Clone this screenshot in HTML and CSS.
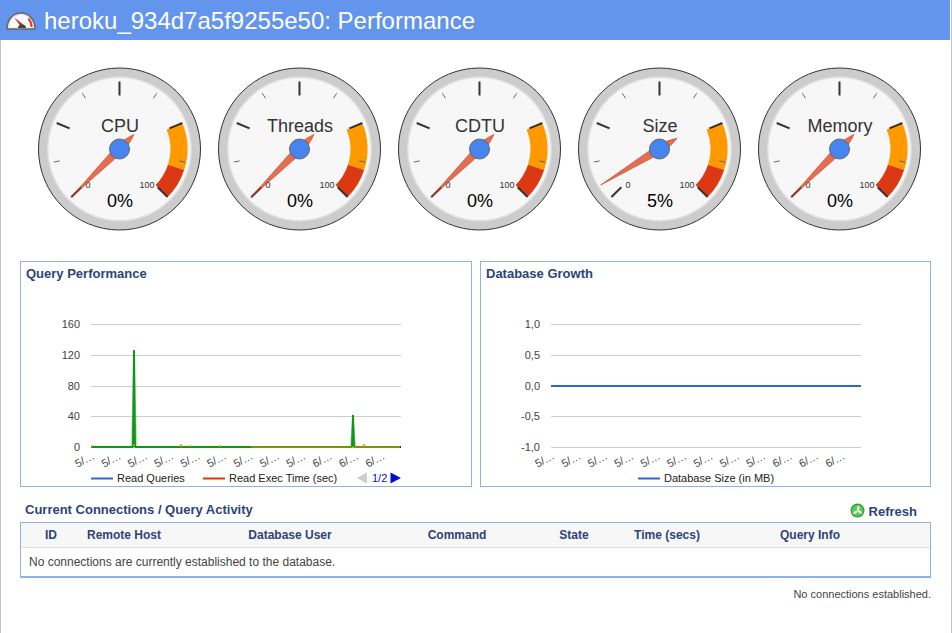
FILE: index.html
```html
<!DOCTYPE html>
<html lang="en">
<head>
<meta charset="utf-8">
<title>Performance</title>
<link rel="stylesheet" href="styles.css">
</head>
<body>
<svg class="defs" width="0" height="0" aria-hidden="true">
  <symbol id="dial" viewBox="-89.5 -90 180 180" overflow="visible">
    <circle r="81" fill="#ccc" stroke="#333" stroke-width="1"/>
    <circle r="72.5" fill="#e0e0e0"/>
    <circle r="71" fill="#f7f7f7"/>
    <path d="M47.12 -19.52 L62.82 -26.02 A68 68 0 0 1 64.67 21.01 L48.5 15.76 A51 51 0 0 0 47.12 -19.52Z" fill="#f90"/>
    <path d="M64.67 21.01 A68 68 0 0 1 48.08 48.08 L36.06 36.06 A51 51 0 0 0 48.5 15.76Z" fill="#dc3912"/>
    <g stroke="#333" stroke-width="2">
      <line x1="-38.2" y1="38.2" x2="-48.08" y2="48.08"/>
      <line x1="-49.9" y1="-20.67" x2="-62.82" y2="-26.02"/>
      <line x1="0" y1="-53.5" x2="0" y2="-67.5"/>
      <line x1="49.9" y1="-20.67" x2="62.82" y2="-26.02"/>
      <line x1="38.2" y1="38.2" x2="48.08" y2="48.08"/>
    </g>
    <g stroke="#666" stroke-width="1">
      <line x1="-59.83" y1="11.9" x2="-65.71" y2="13.07"/>
      <line x1="-33.89" y1="-50.72" x2="-37.22" y2="-55.7"/>
      <line x1="33.89" y1="-50.72" x2="37.22" y2="-55.7"/>
      <line x1="59.83" y1="11.9" x2="65.71" y2="13.07"/>
    </g>
  </symbol>
  <symbol id="needle" viewBox="-89.5 -90 180 180" overflow="visible">
    <path d="M0 -69 L4 -6 Q5 8 0 20.5 Q-5 8 -4 -6Z" fill="#dc3912" fill-opacity="0.72" stroke="#c63310" stroke-width="0.5"/>
  </symbol>
</svg>

<header class="topbar">
  <svg class="topbar-icon" width="30" height="18" viewBox="0 0 30 18">
    <path d="M1 17 C1 7.5 7 1 15 1 C23 1 29 7.5 29 17Z" fill="#e6e6e6" stroke="#666" stroke-width="1.5"/>
    <path d="M3.5 15.5 C3.5 8.5 8.5 3.2 15 3.2 C21.5 3.2 26.5 8.5 26.5 15.5Z" fill="#fff"/>
    <path d="M22.5 6.5 C24.5 9 25.5 11.5 25.6 15" fill="none" stroke="#e8401a" stroke-width="2.2"/>
    <path d="M8 5.5 L17.5 12.5 L15 15Z" fill="#b5402c"/>
    <path d="M12 16 A4 3.5 0 0 1 20 16Z" fill="#444"/>
  </svg>
  <h1 class="topbar-title">heroku_934d7a5f9255e50: Performance</h1>
</header>

<main class="page">
  <section class="gauges">
    <svg class="gauge" viewBox="-89.5 -90 180 180">
      <use href="#dial" x="-89.5" y="-90" width="180" height="180"/>
      <text class="g-title" x="0.5" y="-17">CPU</text>
      <text class="g-min" x="-31.5" y="39">0</text>
      <text class="g-max" x="35" y="39">100</text>
      <text class="g-value" x="0.5" y="58">0%</text>
      <g transform="rotate(-135)"><use href="#needle" x="-89.5" y="-90" width="180" height="180"/></g>
      <circle class="g-hub" r="10"/>
    </svg>
    <svg class="gauge" viewBox="-89.5 -90 180 180">
      <use href="#dial" x="-89.5" y="-90" width="180" height="180"/>
      <text class="g-title" x="0.5" y="-17">Threads</text>
      <text class="g-min" x="-31.5" y="39">0</text>
      <text class="g-max" x="35" y="39">100</text>
      <text class="g-value" x="0.5" y="58">0%</text>
      <g transform="rotate(-135)"><use href="#needle" x="-89.5" y="-90" width="180" height="180"/></g>
      <circle class="g-hub" r="10"/>
    </svg>
    <svg class="gauge" viewBox="-89.5 -90 180 180">
      <use href="#dial" x="-89.5" y="-90" width="180" height="180"/>
      <text class="g-title" x="0.5" y="-17">CDTU</text>
      <text class="g-min" x="-31.5" y="39">0</text>
      <text class="g-max" x="35" y="39">100</text>
      <text class="g-value" x="0.5" y="58">0%</text>
      <g transform="rotate(-135)"><use href="#needle" x="-89.5" y="-90" width="180" height="180"/></g>
      <circle class="g-hub" r="10"/>
    </svg>
    <svg class="gauge" viewBox="-89.5 -90 180 180">
      <use href="#dial" x="-89.5" y="-90" width="180" height="180"/>
      <text class="g-title" x="0.5" y="-17">Size</text>
      <text class="g-min" x="-31.5" y="39">0</text>
      <text class="g-max" x="35" y="39">100</text>
      <text class="g-value" x="0.5" y="58">5%</text>
      <g transform="rotate(-121.5)"><use href="#needle" x="-89.5" y="-90" width="180" height="180"/></g>
      <circle class="g-hub" r="10"/>
    </svg>
    <svg class="gauge" viewBox="-89.5 -90 180 180">
      <use href="#dial" x="-89.5" y="-90" width="180" height="180"/>
      <text class="g-title" x="0.5" y="-17">Memory</text>
      <text class="g-min" x="-31.5" y="39">0</text>
      <text class="g-max" x="35" y="39">100</text>
      <text class="g-value" x="0.5" y="58">0%</text>
      <g transform="rotate(-135)"><use href="#needle" x="-89.5" y="-90" width="180" height="180"/></g>
      <circle class="g-hub" r="10"/>
    </svg>
  </section>

  <section class="charts">
    <article class="panel">
      <h2 class="panel-title">Query Performance</h2>
      <svg class="chart" viewBox="0 0 449 202" width="449" height="202">
        <g class="grid">
          <line x1="70" x2="380" y1="40.5" y2="40.5"/>
          <line x1="70" x2="380" y1="71.5" y2="71.5"/>
          <line x1="70" x2="380" y1="102.5" y2="102.5"/>
          <line x1="70" x2="380" y1="132.5" y2="132.5"/>
        </g>
        <g class="y-labels">
          <text x="59" y="44">160</text>
          <text x="59" y="75">120</text>
          <text x="59" y="106">80</text>
          <text x="59" y="136">40</text>
          <text x="59" y="167">0</text>
        </g>
        <polygon class="s-halo" points="109.5,163 113,66 116.5,163"/>
        <polygon class="s-halo" points="328.5,163 332,131 335.5,163"/>
        <polyline class="s-green" points="70,163 112,163 113,66 114,163 331,163 332,131 333,163 380,163"/>
        <line class="s-orange" x1="230" x2="380" y1="163" y2="163"/>
        <line class="s-end" x1="379" x2="380" y1="163" y2="163"/>
        <g class="s-dots">
          <circle cx="160" cy="161.5" r="1.3"/><circle cx="169" cy="162" r="1"/>
          <circle cx="199" cy="162" r="1"/><circle cx="71" cy="162" r="1"/>
          <circle cx="343" cy="161.5" r="1.3"/><circle cx="113" cy="161" r="1"/>
        </g>
        <g class="x-labels">
          <text transform="translate(56.5 183.7) rotate(-28)">5/…</text>
          <text transform="translate(82.9 183.7) rotate(-28)">5/…</text>
          <text transform="translate(109.3 183.7) rotate(-28)">5/…</text>
          <text transform="translate(135.7 183.7) rotate(-28)">5/…</text>
          <text transform="translate(162.1 183.7) rotate(-28)">5/…</text>
          <text transform="translate(188.5 183.7) rotate(-28)">5/…</text>
          <text transform="translate(214.9 183.7) rotate(-28)">5/…</text>
          <text transform="translate(241.3 183.7) rotate(-28)">5/…</text>
          <text transform="translate(267.7 183.7) rotate(-28)">5/…</text>
          <text transform="translate(294.1 183.7) rotate(-28)">6/…</text>
          <text transform="translate(320.5 183.7) rotate(-28)">6/…</text>
          <text transform="translate(346.9 183.7) rotate(-28)">6/…</text>
        </g>
        <line class="leg-blue" x1="70" x2="92" y1="194.5" y2="194.5"/>
        <text class="leg-text" x="96" y="198">Read Queries</text>
        <line class="leg-red" x1="182" x2="204" y1="194.5" y2="194.5"/>
        <text class="leg-text" x="208" y="198">Read Exec Time (sec)</text>
        <polygon class="pg-off" points="336,194 346,188.5 346,199.5"/>
        <text class="pg-text" x="351" y="198">1/2</text>
        <polygon class="pg-on" points="380,194 369.5,188.5 369.5,199.5"/>
      </svg>
    </article>
    <article class="panel">
      <h2 class="panel-title">Database Growth</h2>
      <svg class="chart" viewBox="0 0 449 202" width="449" height="202">
        <g class="grid">
          <line x1="70" x2="380" y1="40.5" y2="40.5"/>
          <line x1="70" x2="380" y1="71.5" y2="71.5"/>
          <line x1="70" x2="380" y1="132.5" y2="132.5"/>
          <line x1="70" x2="380" y1="163.5" y2="163.5"/>
        </g>
        <g class="y-labels">
          <text x="59" y="44">1,0</text>
          <text x="59" y="75">0,5</text>
          <text x="59" y="106">0,0</text>
          <text x="59" y="136">-0,5</text>
          <text x="59" y="167">-1,0</text>
        </g>
        <line class="s-line" x1="70" x2="380" y1="102" y2="102"/>
        <g class="x-labels">
          <text transform="translate(56.5 183.7) rotate(-28)">5/…</text>
          <text transform="translate(82.9 183.7) rotate(-28)">5/…</text>
          <text transform="translate(109.3 183.7) rotate(-28)">5/…</text>
          <text transform="translate(135.7 183.7) rotate(-28)">5/…</text>
          <text transform="translate(162.1 183.7) rotate(-28)">5/…</text>
          <text transform="translate(188.5 183.7) rotate(-28)">5/…</text>
          <text transform="translate(214.9 183.7) rotate(-28)">5/…</text>
          <text transform="translate(241.3 183.7) rotate(-28)">5/…</text>
          <text transform="translate(267.7 183.7) rotate(-28)">5/…</text>
          <text transform="translate(294.1 183.7) rotate(-28)">6/…</text>
          <text transform="translate(320.5 183.7) rotate(-28)">6/…</text>
          <text transform="translate(346.9 183.7) rotate(-28)">6/…</text>
        </g>
        <line class="leg-blue" x1="157" x2="179" y1="194.5" y2="194.5"/>
        <text class="leg-text" x="183" y="198">Database Size (in MB)</text>
      </svg>
    </article>
  </section>

  <section class="activity">
    <div class="activity-head">
      <h2 class="activity-title">Current Connections / Query Activity</h2>
      <a class="refresh">
        <svg class="refresh-icon" width="15" height="15" viewBox="0 0 15 15">
          <circle cx="7.5" cy="7.5" r="7" fill="#2fa62f"/>
          <circle cx="7.5" cy="7.5" r="5.6" fill="#5cc85c"/>
          <path d="M7.5 7.5 C6.5 5.5 7 3.5 9 2.5 C10 3.8 9.8 6 7.5 7.5Z M7.5 7.5 C9.8 7 11.5 8 12 10.2 C10.4 10.8 8.4 10 7.5 7.5Z M7.5 7.5 C7.2 9.7 5.8 11.2 3.4 11 C3 9.4 4.6 7.8 7.5 7.5Z" fill="#fff"/>
        </svg>
        Refresh
      </a>
    </div>
    <div class="table">
      <div class="table-head">
        <span class="th">ID</span>
        <span class="th">Remote Host</span>
        <span class="th">Database User</span>
        <span class="th">Command</span>
        <span class="th">State</span>
        <span class="th">Time (secs)</span>
        <span class="th">Query Info</span>
      </div>
      <div class="table-row">No connections are currently established to the database.</div>
    </div>
    <p class="note">No connections established.</p>
  </section>
</main>
</body>
</html>
```

FILE: styles.css
```css
* { box-sizing: border-box; }
html, body { margin: 0; padding: 0; }
body {
  width: 952px;
  height: 633px;
  overflow: hidden;
  background: #fff;
  border-right: 1px solid #c4c4c4;
  font-family: "Liberation Sans", Arial, sans-serif;
}
.defs { position: absolute; }

.topbar {
  width: 950px;
  height: 40px;
  background: #6495ed;
  display: flex;
  padding-left: 6px;
  gap: 8px;
}
.topbar-icon { flex: none; margin-top: 12px; }
.topbar-title {
  margin: 0;
  color: #fff;
  font-size: 24px;
  line-height: 40px;
  padding-top: 1px;
  font-weight: 400;
}

.page {
  height: 593px;
  border-left: 1px solid #c4c4c4;
  padding-top: 19px;
}

.gauges {
  display: flex;
  padding-left: 29px;
}
.gauge { width: 180px; height: 180px; flex: none; overflow: visible; }
.g-title { font-size: 18px; fill: #333; text-anchor: middle; }
.g-value { font-size: 18px; fill: #000; text-anchor: middle; }
.g-min { font-size: 9px; fill: #333; text-anchor: middle; }
.g-max { font-size: 9px; fill: #333; text-anchor: end; }
.g-hub { fill: #4684ee; stroke: #666; stroke-width: 1; }

.charts {
  display: grid;
  grid-template-columns: 452px 451px;
  column-gap: 8px;
  margin-top: 22px;
  padding-left: 19px;
}
.panel {
  height: 226px;
  border: 1px solid #8fb2e8;
}
.panel-title {
  margin: 0;
  height: 22px;
  padding: 5px 0 0 5px;
  font-size: 13px;
  line-height: 14px;
  font-weight: 700;
  color: #2c4478;
}
.chart { display: block; }
.grid line { stroke: #ccc; stroke-width: 1; }
.y-labels text { font-size: 11px; fill: #444; text-anchor: end; }
.x-labels text { font-size: 11px; fill: #444; }
.s-halo { fill: #109618; opacity: 0.28; }
.s-green { fill: none; stroke: #109618; stroke-width: 2; stroke-linejoin: bevel; }
.s-orange { stroke: #ff9900; stroke-width: 2; opacity: 0.4; }
.s-end { stroke: #333; stroke-width: 2; }
.s-dots circle { fill: #ff9900; }
.s-line { stroke: #3366cc; stroke-width: 2; }
.leg-blue { stroke: #3366cc; stroke-width: 2; }
.leg-red { stroke: #dc3912; stroke-width: 2; }
.leg-text { font-size: 11px; fill: #222; }
.pg-off { fill: #ccc; }
.pg-on { fill: #0011cc; }
.pg-text { font-size: 11px; fill: #0011cc; }

.activity { padding-left: 19px; width: 930px; }
.activity-head {
  height: 35px;
  display: flex;
  justify-content: space-between;
  align-items: flex-start;
  padding: 16px 14px 0 5px;
}
.activity-title {
  margin: 0;
  font-size: 13px;
  line-height: 14px;
  font-weight: 700;
  color: #2c4478;
}
.refresh {
  display: flex;
  align-items: center;
  gap: 4px;
  font-size: 13px;
  line-height: 14px;
  font-weight: 700;
  color: #2c4478;
  padding-top: 2px;
}
.refresh-icon { flex: none; margin-top: -3px; }

.table {
  height: 56px;
  border: 1px solid #8fb2e8;
  border-bottom-width: 2px;
}
.table-head {
  height: 25px;
  background: #f7f7f7;
  border-bottom: 1px solid #ddd;
  display: grid;
  grid-template-columns: 20px 126px 206px 128px 106px 80px 206px;
  padding-left: 20px;
  align-items: center;
}
.th {
  display: flex;
  justify-content: center;
  white-space: nowrap;
  font-size: 12px;
  font-weight: 700;
  color: #2c4478;
}
.table-row {
  padding: 7px 0 0 8px;
  font-size: 12px;
  line-height: 14px;
  color: #444;
}
.note {
  margin: 10px 0 0;
  text-align: right;
  font-size: 11px;
  line-height: 13px;
  color: #444;
}
```
